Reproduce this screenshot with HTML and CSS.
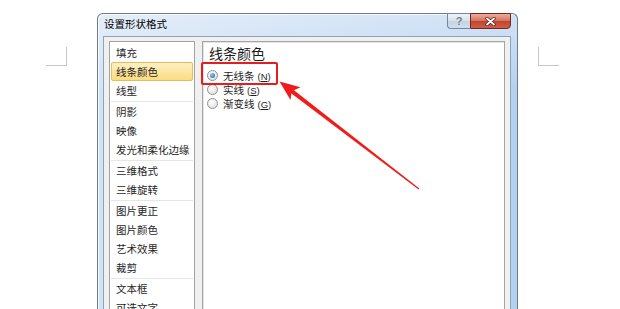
FILE: index.html
```html
<!DOCTYPE html>
<html lang="zh-CN">
<head>
    <meta charset="UTF-8">
    <title>设置形状格式</title>
    <link rel="stylesheet" href="styles.css">
</head>
<body>
    <div class="mark mark-l"></div>
    <div class="mark mark-r"></div>

    <div class="dialog">
        <div class="titlebar">
            <span class="title">设置形状格式</span>
            <div class="ctrl">
                <div class="btn-help">?</div>
                <div class="btn-close">
                    <svg width="11" height="9" viewBox="0 0 11 9">
                        <path d="M2 1.5 L9 7.5 M9 1.5 L2 7.5" stroke="#5b2018" stroke-width="3.4" stroke-linecap="round"/>
                        <path d="M2 1.5 L9 7.5 M9 1.5 L2 7.5" stroke="#fff" stroke-width="1.8" stroke-linecap="round"/>
                    </svg>
                </div>
            </div>
        </div>

        <div class="client">
            <div class="nav">
                <div class="nav-group">
                    <div class="nav-item">填充</div>
                    <div class="nav-item active">线条颜色</div>
                    <div class="nav-item">线型</div>
                </div>
                <div class="nav-group">
                    <div class="nav-item">阴影</div>
                    <div class="nav-item">映像</div>
                    <div class="nav-item">发光和柔化边缘</div>
                </div>
                <div class="nav-group">
                    <div class="nav-item">三维格式</div>
                    <div class="nav-item">三维旋转</div>
                </div>
                <div class="nav-group">
                    <div class="nav-item">图片更正</div>
                    <div class="nav-item">图片颜色</div>
                    <div class="nav-item">艺术效果</div>
                    <div class="nav-item">裁剪</div>
                </div>
                <div class="nav-group">
                    <div class="nav-item">文本框</div>
                    <div class="nav-item">可选文字</div>
                </div>
            </div>

            <div class="panel">
                <div class="heading">线条颜色</div>
                <div class="options">
                    <div class="opt"><span class="radio on"></span><span>无线条<span class="key">(<u>N</u>)</span></span></div>
                    <div class="opt"><span class="radio"></span><span>实线<span class="key">(<u>S</u>)</span></span></div>
                    <div class="opt"><span class="radio"></span><span>渐变线<span class="key">(<u>G</u>)</span></span></div>
                </div>
            </div>
        </div>
    </div>

    <!-- 红框和箭头标注 -->
    <div class="callout"></div>
    <svg class="arrow" width="620" height="309" viewBox="0 0 620 309">
        <polygon fill="#f01c1c" points="279.5,81.5 300.5,87.2 294,90.2 419.4,188.4 418.6,189.6 291.4,93.5 290.5,100"/>
    </svg>
</body>
</html>
```

FILE: styles.css
```css
body{
    margin: 0;
    width: 620px;
    height: 309px;
    overflow: hidden;
    position: relative;
    background: #fff;
    font-family: "Noto Sans CJK SC", "Noto Sans", sans-serif;
}

/* 页面角标 */
.mark{
    position: absolute;
    top: 47px;
    width: 20px;
    height: 18px;
    border-bottom: 1px solid #c6c6c6;
}
.mark-l{
    left: 46px;
    border-right: 1px solid #c6c6c6;
}
.mark-r{
    left: 538px;
    border-left: 1px solid #c6c6c6;
}

/* 对话框 */
.dialog{
    position: absolute;
    left: 97px;
    top: 13px;
    width: 421px;
    height: 310px;
    box-sizing: border-box;
    border: 1px solid #6d7b8c;
    border-bottom: none;
    border-radius: 6px 6px 0 0;
    background: linear-gradient(to bottom, rgba(255,255,255,0.4), rgba(255,255,255,0) 25%),
                linear-gradient(to right, #d2e3f6, #b4d0f0);
    box-shadow: inset 1px 1px 0 rgba(255,255,255,0.8);
    padding: 0 6px 0 5px;
    display: flex;
    flex-direction: column;
}

.titlebar{
    height: 22px;
    display: flex;
    justify-content: space-between;
    align-items: flex-start;
}
.title{
    margin-left: 1px;
    line-height: 20px;
    font-size: 10.5px;
    color: #000;
}
.ctrl{
    display: flex;
    margin-top: -1px;
}
.btn-help{
    width: 23px;
    height: 16px;
    box-sizing: border-box;
    border: 1px solid #7587a0;
    border-right: none;
    border-radius: 0 0 0 4px;
    background: linear-gradient(#eef3f9, #d6e0ec 50%, #c4d2e3 50%, #d3deeb);
    display: flex;
    align-items: center;
    justify-content: center;
    font: bold 11px "Liberation Sans", sans-serif;
    color: #6b7a8f;
    text-shadow: 0 0 1px #fff;
}
.btn-close{
    width: 41px;
    height: 16px;
    box-sizing: border-box;
    border: 1px solid #6c2a22;
    border-radius: 0 0 4px 0;
    background: linear-gradient(#e9ada0, #d7705b 50%, #c3432d 50%, #cf5f48);
    display: flex;
    align-items: center;
    justify-content: center;
}

.client{
    flex: 1;
    display: flex;
    gap: 7px;
    padding: 4px 5px 0;
    border: 1px solid #8ea2b8;
    background: #f0f0f0;
}

/* 左侧列表 */
.nav{
    width: 86px;
    box-sizing: border-box;
    border: 1px solid #a3a3a3;
    background: #fff;
    padding: 1px 1px 0;
}
.nav-group + .nav-group{
    margin-top: 1px;
    border-top: 1px solid #e6e6e6;
}
.nav-item{
    height: 19px;
    line-height: 19px;
    padding-left: 5px;
    box-sizing: border-box;
    font-size: 10.5px;
    color: #1e1e1e;
    white-space: nowrap;
}
.nav-item.active{
    background: linear-gradient(#fdf0c2, #fbdc80);
    border: 1px solid #e2bd5e;
    border-radius: 2px;
    padding-left: 4px;
    line-height: 17px;
}

/* 右侧面板 */
.panel{
    flex: 1;
    border: 1px solid #a5a5a5;
    box-shadow: inset 1px 1px 0 #e4e4e4;
    background: #fff;
    padding: 2px 4px;
}
.heading{
    margin-left: 2px;
    font-size: 14px;
    line-height: 18px;
    color: #1a1a1a;
}
.options{
    margin-top: 6px;
}
.opt{
    display: flex;
    align-items: center;
    gap: 5px;
    height: 14px;
    font-size: 10.5px;
    color: #1e1e1e;
    white-space: nowrap;
}
.key{
    margin-left: 3px;
    font: 9.5px "Liberation Sans", sans-serif;
}
.radio{
    width: 11px;
    height: 11px;
    box-sizing: border-box;
    border-radius: 50%;
    border: 1px solid #8f9294;
    background: radial-gradient(circle at 40% 35%, #ffffff, #d9d9d9);
    display: flex;
    align-items: center;
    justify-content: center;
}
.radio.on::after{
    content: "";
    width: 5px;
    height: 5px;
    border-radius: 50%;
    background: radial-gradient(circle at 40% 35%, #8cc8f4, #1f5fa3);
}

/* 标注 */
.callout{
    position: absolute;
    left: 201px;
    top: 62px;
    width: 77px;
    height: 23px;
    box-sizing: border-box;
    border: 2px solid #e81c1c;
    border-radius: 2px;
}
.arrow{
    position: absolute;
    left: 0;
    top: 0;
    pointer-events: none;
}
```
